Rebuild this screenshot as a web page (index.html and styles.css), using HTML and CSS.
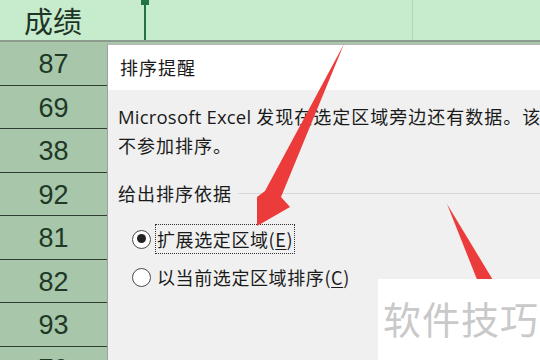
FILE: index.html
```html
<!DOCTYPE html>
<html lang="zh-CN">
<head>
  <meta charset="UTF-8" />
  <title>排序提醒</title>
  <link rel="stylesheet" href="styles.css">
</head>
<body>
  <div class="sheet">
    <div class="header-row">
      <div class="head-cell">成绩</div>
      <div class="head-rest"></div>
    </div>
    <div class="cell">87</div>
    <div class="cell">69</div>
    <div class="cell">38</div>
    <div class="cell">92</div>
    <div class="cell">81</div>
    <div class="cell">82</div>
    <div class="cell">93</div>
    <div class="cell">79</div>
  </div>

  <div class="dialog">
    <div class="dialog-title">排序提醒</div>
    <div class="dialog-body">
      <p class="message"><span class="latin">Microsoft Excel </span>发现在选定区域旁边还有数据。该<br>不参加排序。</p>
      <div class="group-label"><span>给出排序依据</span></div>
      <label class="option first"><span class="radio checked"></span><span class="opt-text">扩展选定区域(<u>E</u>)</span></label>
      <label class="option"><span class="radio"></span><span class="opt-text">以当前选定区域排序(<u>C</u>)</span></label>
    </div>
  </div>

  <svg class="arrows" width="540" height="360" viewBox="0 0 540 360">
    <polygon fill="#ec3b3b" points="344,44 281,197 290,207 257,226 257,197 265,191"/>
    <polygon fill="#ec3b3b" points="447,204 499,290 482,292"/>
  </svg>

  <div class="watermark">软件技巧</div>
</body>
</html>
```

FILE: styles.css
```css
body {
  margin: 0;
  width: 540px;
  height: 360px;
  overflow: hidden;
  position: relative;
  background: #a8c7aa;
  font-family: "Noto Sans CJK SC", sans-serif;
}
.sheet {
  width: 540px;
}
.header-row {
  display: flex;
  height: 40px;
  background: #c7eccd;
  border-bottom: 2px solid #8c9c8e;
}
.head-cell {
  width: 146px;
  box-sizing: border-box;
  border-right: 2px solid #217346;
  padding-right: 38px;
  text-align: center;
  font-size: 29px;
  line-height: 40px;
  color: #1f3526;
  position: relative;
}
.head-cell::after {
  content: "";
  position: absolute;
  right: -5px;
  top: -3px;
  width: 8px;
  height: 8px;
  background: #217346;
}
.head-rest {
  flex: 1;
  margin-left: 266px;
  border-left: 1px solid #b3d4b8;
}
.cell {
  height: 42.5px;
  width: 107px;
  border-bottom: 1px solid #2e3d30;
  background: #a8c7aa;
  text-align: center;
  font-family: "Liberation Sans", sans-serif;
  font-size: 27px;
  line-height: 44px;
  color: #203826;
}
.dialog {
  position: absolute;
  left: 107px;
  top: 44px;
  width: 460px;
  height: 330px;
  border-left: 1px solid #a0a0a0;
  border-top: 1px solid #b8b8b8;
  background: #f0f0f0;
  color: #1a1a1a;
}
.dialog-title {
  height: 45px;
  background: #ffffff;
  padding-left: 12px;
  font-size: 18px;
  letter-spacing: 1px;
  line-height: 44px;
}
.dialog-body {
  padding: 12px 0 0 10px;
}
.message {
  margin: 0;
  white-space: nowrap;
  line-height: 29px;
  font-size: 18px;
  letter-spacing: 1px;
}
.latin {
  font-family: "Open Sans", sans-serif;
  font-size: 18.5px;
  letter-spacing: 0.2px;
}
.group-label {
  display: flex;
  align-items: center;
  margin-top: 20px;
  font-size: 18px;
  letter-spacing: 1px;
}
.group-label::after {
  content: "";
  flex: 1;
  height: 1px;
  background: #d9d9d9;
  margin-left: 6px;
}
.option {
  display: flex;
  align-items: center;
  margin-left: 14px;
  height: 38px;
  font-size: 18px;
  letter-spacing: 0.6px;
}
.option.first {
  margin-top: 14px;
}
.radio {
  width: 19px;
  height: 19px;
  border: 1.5px solid #4a4a4a;
  border-radius: 50%;
  background: #fff;
  box-sizing: border-box;
  position: relative;
  margin-right: 4px;
}
.radio.checked::after {
  content: "";
  position: absolute;
  left: 3.5px;
  top: 3.5px;
  width: 9px;
  height: 9px;
  border-radius: 50%;
  background: #222;
}
.opt-text {
  padding: 3px 1px;
  border: 1px dotted transparent;
  line-height: 22px;
}
.first .opt-text {
  border-color: #333;
}
.opt-text u {
  text-underline-offset: 2px;
}
.arrows {
  position: absolute;
  left: 0;
  top: 0;
}
.watermark {
  position: absolute;
  left: 378px;
  top: 279px;
  width: 162px;
  height: 81px;
  background: #ffffff;
  color: #c9c9c9;
  font-size: 38px;
  line-height: 78px;
  padding-left: 5px;
  box-sizing: border-box;
  letter-spacing: 1px;
}
```
